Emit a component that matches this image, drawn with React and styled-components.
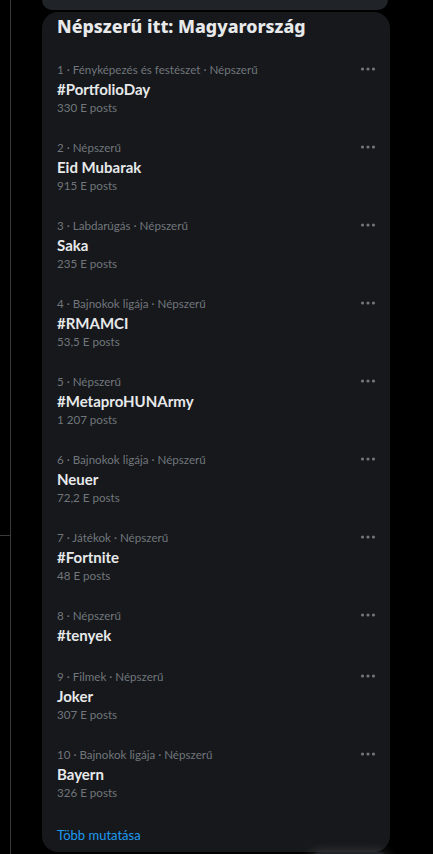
import styled, { createGlobalStyle } from 'styled-components';

const trends = [
  { meta: 'Fényképezés és festészet · Népszerű', title: '#PortfolioDay', posts: '330 E posts' },
  { meta: 'Népszerű', title: 'Eid Mubarak', posts: '915 E posts' },
  { meta: 'Labdarúgás · Népszerű', title: 'Saka', posts: '235 E posts' },
  { meta: 'Bajnokok ligája · Népszerű', title: '#RMAMCI', posts: '53,5 E posts' },
  { meta: 'Népszerű', title: '#MetaproHUNArmy', posts: '1 207 posts' },
  { meta: 'Bajnokok ligája · Népszerű', title: 'Neuer', posts: '72,2 E posts' },
  { meta: 'Játékok · Népszerű', title: '#Fortnite', posts: '48 E posts' },
  { meta: 'Népszerű', title: '#tenyek' },
  { meta: 'Filmek · Népszerű', title: 'Joker', posts: '307 E posts' },
  { meta: 'Bajnokok ligája · Népszerű', title: 'Bayern', posts: '326 E posts' },
];

const GlobalStyle = createGlobalStyle`
  html, body {
    margin: 0;
    background: #000;
    height: 854px;
    overflow: hidden;
  }
  body {
    font-family: Lato, "Noto Sans", sans-serif;
    color: #e7e9ea;
  }
`;

const Page = styled.div`
  display: flex;
  height: 854px;
`;

const Sidebar = styled.div`
  width: 10px;
  border-right: 1px solid #3a3a3a;
  display: flex;
  flex-direction: column;
`;

const SidebarTop = styled.div`
  height: 535px;
  border-bottom: 1px solid #3a3a3a;
`;

const Column = styled.div`
  margin-left: 31px;
  width: 348px;
  display: flex;
  flex-direction: column;
  gap: 2px;
`;

const SearchCard = styled.div`
  width: 346px;
  height: 10px;
  background: #202327;
  border-radius: 0 0 16px 16px;
`;

const Card = styled.section`
  background: #16181c;
  border-radius: 16px;
  height: 840px;
  overflow: hidden;
`;

const Heading = styled.h2`
  margin: 0;
  padding: 2px 15px 12px;
  font-family: "Noto Sans", sans-serif;
  font-size: 17.8px;
  line-height: 24px;
  font-weight: 800;
  color: #e7e9ea;
`;

const Item = styled.div`
  position: relative;
  padding: 12px 15px;
`;

const Meta = styled.div`
  font-size: 11.6px;
  line-height: 16px;
  color: #71767b;
`;

const Title = styled.div`
  margin-top: 1px;
  font-size: 15px;
  line-height: 20px;
  font-weight: 700;
  color: #e7e9ea;
`;

const Posts = styled.div`
  margin-top: 1px;
  font-size: 11.6px;
  line-height: 16px;
  color: #71767b;
`;

const More = styled.button`
  position: absolute;
  top: 9px;
  right: 12px;
  width: 20px;
  height: 20px;
  padding: 0;
  border: 0;
  background: transparent;
  color: #71767b;
  display: flex;
  align-items: center;
  justify-content: center;
`;

const ShowMore = styled.div`
  padding: 14px 15px 12px;
  font-size: 13px;
  line-height: 16px;
  color: #1d9bf0;
`;

const Drawer = styled.div`
  position: fixed;
  left: 308px;
  top: 852px;
  width: 82px;
  height: 20px;
  background: #202327;
  border-radius: 12px 12px 0 0;
  box-shadow: 0 0 12px rgba(255, 255, 255, 0.18);
`;

function Dots() {
  return (
    <svg width="18" height="18" viewBox="0 0 18 18" fill="currentColor">
      <circle cx="3.5" cy="9" r="1.6" />
      <circle cx="9" cy="9" r="1.6" />
      <circle cx="14.5" cy="9" r="1.6" />
    </svg>
  );
}

export default function App() {
  return (
    <>
      <GlobalStyle />
      <Page>
        <Sidebar>
          <SidebarTop />
        </Sidebar>
        <Column>
          <SearchCard />
          <Card>
            <Heading>Népszerű itt: Magyarország</Heading>
            {trends.map((t, i) => (
              <Item key={t.title}>
                <Meta>
                  {i + 1} · {t.meta}
                </Meta>
                <Title>{t.title}</Title>
                {t.posts && <Posts>{t.posts}</Posts>}
                <More>
                  <Dots />
                </More>
              </Item>
            ))}
            <ShowMore>Több mutatása</ShowMore>
          </Card>
        </Column>
      </Page>
      <Drawer />
    </>
  );
}
